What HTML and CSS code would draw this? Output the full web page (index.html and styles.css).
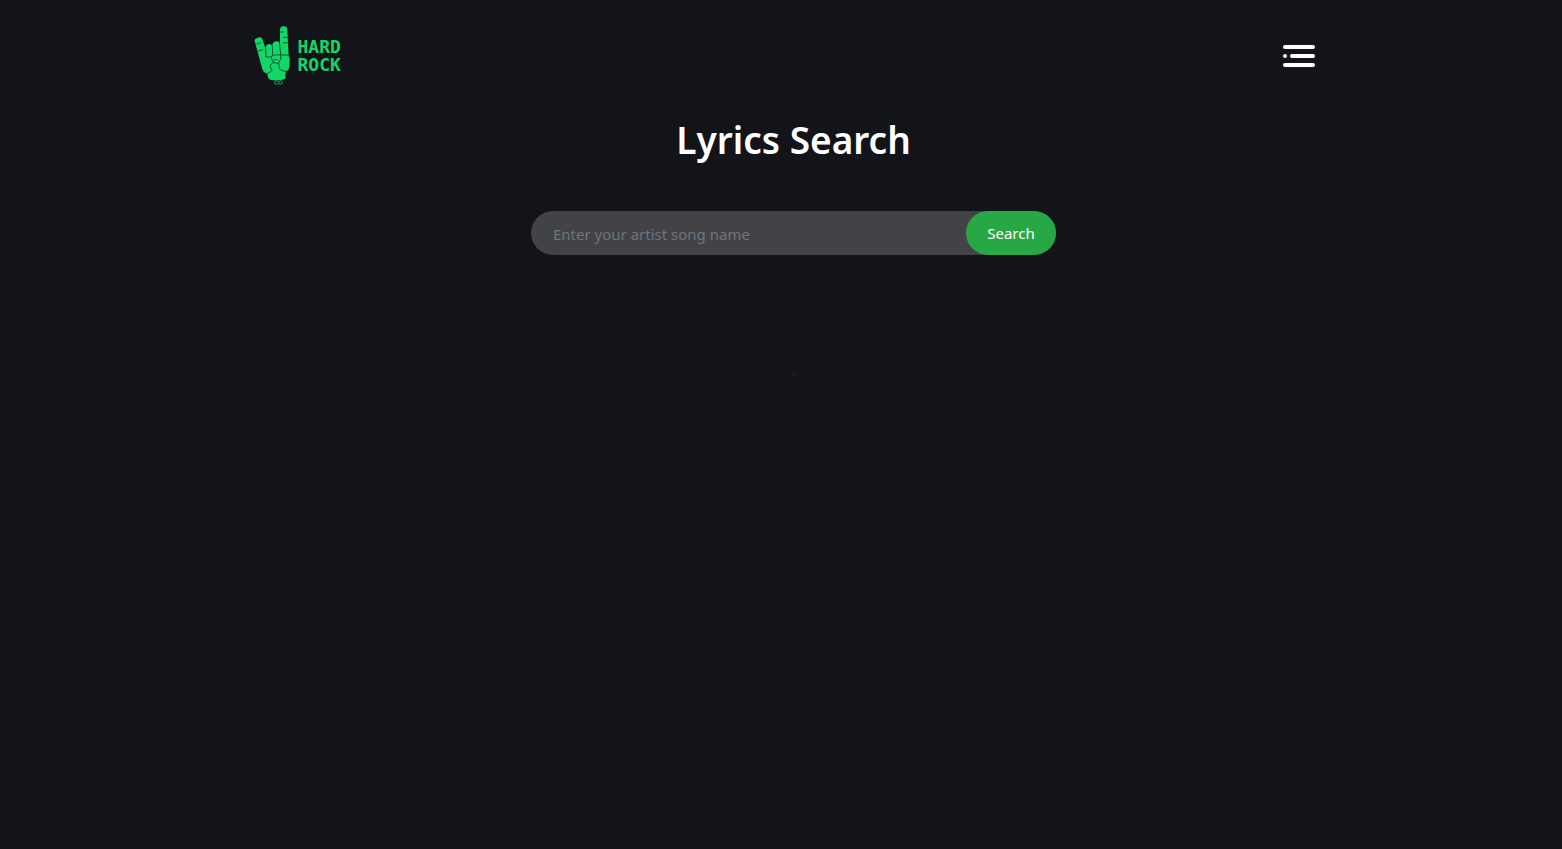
FILE: index.html
```html
<!DOCTYPE html>
<html lang="en">
<head>
  <meta charset="utf-8">
  <meta name="viewport" content="width=device-width, initial-scale=1">
  <title>Lyrics Search</title>
  <link rel="stylesheet" href="styles.css">
</head>
<body>
  <header class="navbar">
    <a class="logo" href="#">
      <svg class="logo-hand" viewBox="24 21 120 186" aria-hidden="true">
        <path fill="#12d768" d="M29 69Q28 63 35 61L43 58Q51 57 52 64L62 92Q62 79 72 78Q80 78 82 85Q82 71 93 70Q102 69 105 77V33Q106 26 114 25Q126 24 127 33L131 113Q136 119 134 130L133 149Q131 157 123 160L121 174Q125 179 119 183L106 187H82Q70 185 69 178L67 167Q55 165 51 150Z"/>
        <g fill="none" stroke="#12131a" stroke-width="2" stroke-linecap="round">
          <path d="M62 92L63 116M82 85L83 111M104 77L107 111M63 116Q70 121 79 115Q91 107 105 111H131M79 115Q78 127 87 134L100 136Q108 125 108 115M87 134Q76 136 76 145Q77 154 82 157Q76 163 68 166M102 137Q101 150 106 156L122 160M87 125H98M36 78L47 74M39 99L53 95M106 42H116M116 58H128M116 75L129 74"/>
        </g>
        <path fill="none" stroke="#0fb55b" stroke-width="3" d="M96 189Q88 187 89 193Q88 199 94 199Q99 199 101 195Q105 201 110 198Q115 193 110 189Q105 186 104 192L97 191"/>
      </svg>
      <span class="logo-text"><span>HARD</span><span>ROCK</span></span>
    </a>
    <button class="menu" type="button" aria-label="Menu">
      <svg viewBox="0 0 32 22" aria-hidden="true">
        <path d="M2 2H30M9 11H30M2 11H2M2 20H30" fill="none" stroke="#fff" stroke-width="4" stroke-linecap="round"/>
      </svg>
    </button>
  </header>
  <main class="content">
    <h1 class="title">Lyrics Search</h1>
    <form class="search">
      <input class="search-input" type="text" placeholder="Enter your artist song name" aria-label="Artist song name">
      <button class="search-button" type="button">Search</button>
    </form>
    <div class="results"></div>
  </main>
</body>
</html>
```
FILE: styles.css
```css
* {
  box-sizing: border-box;
}

body {
  min-height: 100vh;
  margin: 0;
  padding-left: 25px;
  background: #13131a;
  color: #fff;
  font-family: "Noto Sans", "Open Sans", sans-serif;
  font-size: 15px;
}

.navbar {
  display: flex;
  align-items: center;
  justify-content: space-between;
  max-width: 1140px;
  margin: 0 auto;
  padding: 25px 49px 24px 29px;
}

.logo {
  display: flex;
  align-items: center;
  gap: 5px;
  color: #12d768;
  text-decoration: none;
}

.logo-hand {
  display: block;
  width: 40px;
  height: 62px;
}

.logo-text {
  display: flex;
  flex-direction: column;
  font-family: "DejaVu Sans Mono", monospace;
  font-size: 18px;
  font-weight: 700;
  line-height: 18px;
}

.menu {
  padding: 0;
  border: 0;
  background: none;
  cursor: pointer;
}

.menu svg {
  display: block;
  width: 32px;
  height: 22px;
}

.content {
  display: flex;
  flex-direction: column;
  align-items: center;
}

.title {
  margin: 4px 0 46px;
  font-size: 37px;
  font-weight: 600;
  line-height: 50px;
}

.search {
  display: flex;
  width: 100%;
  max-width: 525px;
  border-radius: 22px;
  background: #434347;
}

.search-input {
  flex: 1;
  min-width: 0;
  height: 44px;
  padding: 2px 22px 0;
  border: 0;
  border-radius: 22px;
  outline: 0;
  background: transparent;
  color: #fff;
  font: inherit;
}

.search-input::placeholder {
  color: #6c757d;
  opacity: 1;
}

.search-button {
  width: 90px;
  height: 44px;
  padding: 0;
  border: 0;
  border-radius: 22px;
  background: #28a745;
  color: #fff;
  font: inherit;
  cursor: pointer;
}

.results {
  margin-top: 118px;
  border: 1px solid #202128;
  border-radius: 2px;
  padding: 1px;
}
```
